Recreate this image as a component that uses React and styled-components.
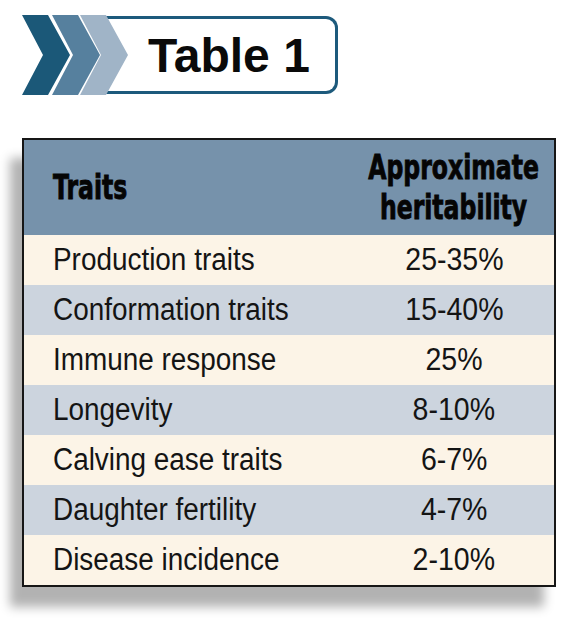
import React from 'react';
import styled, {createGlobalStyle} from 'styled-components';

const GlobalStyle = createGlobalStyle`
  body {
    margin: 0;
    background: #ffffff;
  }
`;

const Page = styled.div`
  padding: 15px 0 36px 22px;
  width: 575px;
  box-sizing: border-box;
`;

/* title banner with the three chevrons */
const Banner = styled.div`
  display: flex;
  align-items: center;
  height: 80px;
`;

const Chevrons = styled.svg`
  position: relative;
  z-index: 1;
  flex: none;
`;

const TitleBox = styled.div`
  margin-left: -30px;
  width: 239px;
  height: 78px;
  box-sizing: border-box;
  border: 3px solid #1d5a7c;
  border-left: none;
  border-radius: 0 12px 12px 0;
  display: flex;
  align-items: center;
  padding-left: 49px;
  font-family: "Liberation Sans", Arial, sans-serif;
  font-weight: 700;
  font-size: 48px;
  color: #0a0a0a;
`;

const Table = styled.div`
  margin-top: 43px;
  width: 534px;
  box-sizing: border-box;
  border: 2px solid #161616;
  box-shadow: -12px 20px 10px rgba(0, 0, 0, 0.3);
  color: #141414;
`;

const Row = styled.div`
  display: grid;
  grid-template-columns: 1fr 200px;
  align-items: center;
  height: ${props => props.head ? '95px' : '50px'};
  background: ${props => props.head ? '#7692ab' : props.shade ? '#ccd4de' : '#fcf4e7'};
`;

const HeadCell = styled.div`
  display: flex;
  justify-content: ${props => props.center ? 'center' : 'flex-start'};
  text-align: center;
  font-family: "DejaVu Sans", sans-serif;
  font-weight: 700;
  font-size: 33px;
  line-height: 40px;
  padding-left: ${props => props.center ? '0' : '29px'};
  color: #050505;
  -webkit-text-stroke: 0.9px #050505;
`;

const Cell = styled.div`
  font-family: "Liberation Sans", Arial, sans-serif;
  font-size: 31px;
  text-align: ${props => props.center ? 'center' : 'left'};
  padding-left: ${props => props.center ? '0' : '29px'};
`;

/* condensed face: narrow the regular glyphs */
const Narrow = styled.span`
  display: inline-block;
  flex: none;
  white-space: nowrap;
  transform: scaleX(${props => props.scale});
  transform-origin: ${props => props.center ? 'center' : 'left'} center;
`;

const rows = [
  ['Production traits', '25-35%'],
  ['Conformation traits', '15-40%'],
  ['Immune response', '25%'],
  ['Longevity', '8-10%'],
  ['Calving ease traits', '6-7%'],
  ['Daughter fertility', '4-7%'],
  ['Disease incidence', '2-10%'],
];

export default function App() {
  return (
    <Page>
      <GlobalStyle />
      <Banner>
        <Chevrons width="107" height="80" viewBox="0 0 107 80">
          <polygon points="0,0 26,0 48,40 26,80 0,80 21,40" fill="#1b5878" />
          <polygon points="30,0 56,0 78,40 56,80 30,80 51,40" fill="#56809e" />
          <polygon points="58,0 84,0 106,40 84,80 58,80 79,40" fill="#a0b4c7" />
        </Chevrons>
        <TitleBox>Table 1</TitleBox>
      </Banner>
      <Table>
        <Row head>
          <HeadCell><Narrow scale={0.714}>Traits</Narrow></HeadCell>
          <HeadCell center>
            <Narrow scale={0.714} center>Approximate<br />heritability</Narrow>
          </HeadCell>
        </Row>
        {rows.map(([trait, value], i) => (
          <Row key={trait} shade={i % 2 === 1}>
            <Cell><Narrow scale={0.9}>{trait}</Narrow></Cell>
            <Cell center><Narrow scale={0.92} center>{value}</Narrow></Cell>
          </Row>
        ))}
      </Table>
    </Page>
  );
}
